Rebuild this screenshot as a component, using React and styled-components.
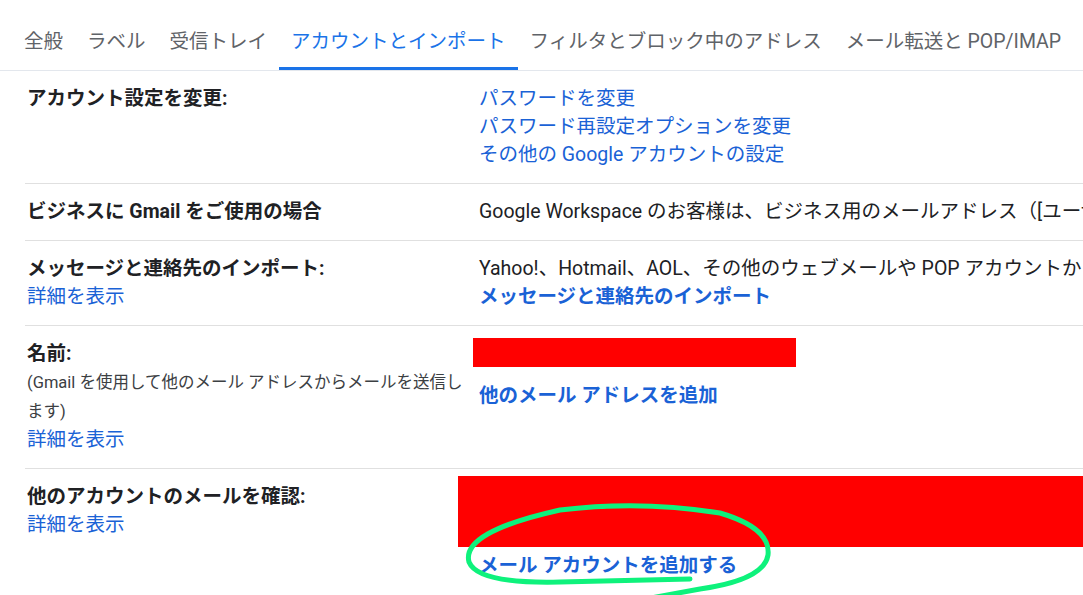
import styled, { createGlobalStyle } from 'styled-components';

const GlobalStyle = createGlobalStyle`
  html, body {
    margin: 0;
    padding: 0;
    overflow: hidden;
    background: #fff;
  }
  body {
    font-family: 'Roboto', 'Noto Sans CJK JP', sans-serif;
    color: #202124;
  }
`;

const tabs = [
  '全般',
  'ラベル',
  '受信トレイ',
  'アカウントとインポート',
  'フィルタとブロック中のアドレス',
  'メール転送と POP/IMAP',
];

export default function App() {
  return (
    <>
      <GlobalStyle />
      <Page>
        <TabBar>
          {tabs.map((name, index) => (
            <Tab key={index} active={index === 3}>{name}</Tab>
          ))}
        </TabBar>

        <Settings>
          <Row>
            <Label>
              <Heading>アカウント設定を変更:</Heading>
            </Label>
            <Value>
              <Link>パスワードを変更</Link>
              <Link>パスワード再設定オプションを変更</Link>
              <Link>その他の Google アカウントの設定</Link>
            </Value>
          </Row>

          <Row>
            <Label>
              <Heading>ビジネスに Gmail をご使用の場合</Heading>
            </Label>
            <Value>
              <Text>Google Workspace のお客様は、ビジネス用のメールアドレス（[ユーザー名]</Text>
            </Value>
          </Row>

          <Row>
            <Label>
              <Heading>メッセージと連絡先のインポート:</Heading>
              <Link>詳細を表示</Link>
            </Label>
            <Value>
              <Text>Yahoo!、Hotmail、AOL、その他のウェブメールや POP アカウントから</Text>
              <Link bold>メッセージと連絡先のインポート</Link>
            </Value>
          </Row>

          <Row>
            <Label>
              <Heading>名前:</Heading>
              <Note>(Gmail を使用して他のメール アドレスからメールを送信します)</Note>
              <Link>詳細を表示</Link>
            </Label>
            <Value>
              <Redacted width="323px" height="29px" top="-2px" left="-6px" />
              <Link bold spaced>他のメール アドレスを追加</Link>
            </Value>
          </Row>

          <Row last>
            <Label>
              <Heading>他のアカウントのメールを確認:</Heading>
              <Link>詳細を表示</Link>
            </Label>
            <Value>
              <Redacted width="calc(100% + 21px)" height="71px" top="-7px" left="-21px" />
              <Link bold>メール アカウントを追加する</Link>
            </Value>
          </Row>
        </Settings>

        <Marker viewBox="0 0 1083 595" aria-hidden="true">
          <path
            d="M 690 579 L 560 582 Q 478 584 469 562 Q 461 532 560 510 Q 640 500 720 513 Q 771 528 768 555 Q 764 580 700 589 L 640 600"
            fill="none"
            stroke="#0ef27c"
            strokeWidth="5"
            strokeLinecap="round"
            strokeLinejoin="round"
          />
        </Marker>
      </Page>
    </>
  );
}

const Page = styled.div`
  position: relative;
  width: 1083px;
  height: 595px;
  overflow: hidden;
`;

const TabBar = styled.div`
  display: flex;
  padding-left: 12px;
  border-bottom: 1px solid #e3e7ed;
  white-space: nowrap;
`;

const Tab = styled.div`
  box-sizing: border-box;
  height: 70px;
  padding: 28px 12px 0;
  font-size: 19.5px;
  line-height: 28px;
  color: ${({ active }) => (active ? '#1a73e8' : '#5f6368')};
  border-bottom: 3px solid ${({ active }) => (active ? '#1a73e8' : 'transparent')};
  cursor: pointer;
`;

const Settings = styled.div`
  margin-left: 25px;
`;

const Row = styled.div`
  display: grid;
  grid-template-columns: 445px 1fr;
  column-gap: 7px;
  padding: 14px 0 14px 2px;
  border-bottom: ${({ last }) => (last ? 'none' : '1px solid #e0e0e0')};
`;

const Label = styled.div`
  display: flex;
  flex-direction: column;
  align-items: flex-start;
`;

const Value = styled.div`
  display: flex;
  flex-direction: column;
  align-items: flex-start;
  min-width: 0;
  white-space: nowrap;
`;

const Heading = styled.div`
  font-size: 19.5px;
  line-height: 28px;
  font-weight: 700;
  color: #202124;
`;

const Note = styled.div`
  font-size: 16.5px;
  line-height: 29px;
  color: #3c4043;
`;

const Text = styled.div`
  font-size: 19.5px;
  line-height: 28px;
  color: #202124;
`;

const Link = styled.a`
  font-size: 19.5px;
  line-height: 28px;
  font-weight: ${({ bold }) => (bold ? 700 : 400)};
  color: #1a62d6;
  text-decoration: none;
  margin-top: ${({ spaced }) => (spaced ? '10px' : '0')};
  cursor: pointer;
`;

const Redacted = styled.div`
  width: ${({ width }) => width};
  height: ${({ height }) => height};
  margin-top: ${({ top }) => top};
  margin-left: ${({ left }) => left};
  margin-bottom: 5px;
  background: #ff0000;
`;

const Marker = styled.svg`
  position: absolute;
  left: 0;
  top: 0;
  width: 1083px;
  height: 595px;
  pointer-events: none;
`;
